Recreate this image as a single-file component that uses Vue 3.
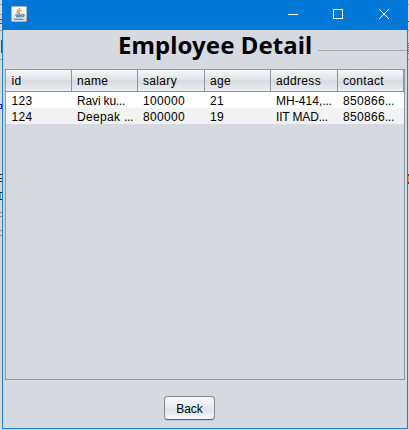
<script setup>
const columns = ['id', 'name', 'salary', 'age', 'address', 'contact']
const rows = [
  [
    { text: '123' },
    { text: 'Ravi ku', cut: true, fit: 'tight' },
    { text: '100000' },
    { text: '21' },
    { text: 'MH-414,', cut: true, fit: 'snug' },
    { text: '850866', cut: true },
  ],
  [
    { text: '124' },
    { text: 'Deepak ', cut: true },
    { text: '800000' },
    { text: '19' },
    { text: 'IIT MAD', cut: true, fit: 'tight' },
    { text: '850866', cut: true },
  ],
]
</script>

<template>
  <div class="desktop">
    <svg class="behind" width="409" height="430" viewBox="0 0 409 430" shape-rendering="crispEdges">
      <path d="M0 4.500h2M0 14.500h2M0 30.500h2M0 59.500h2M408 4.500h1M408 30.500h1M408 59.500h1" stroke="#9da1a8" />
      <path d="M0 19.500h2M0 23.500h2M408 21.500h1" stroke="#4c4a35" />
      <path d="M0 21.500h2" stroke="#d3a52c" />
      <path d="M1.500 40v13" stroke="#31546f" />
      <path d="M408.500 43v11" stroke="#777" stroke-dasharray="1 1" />
      <path d="M0 104.500h2M0 108.500h2M1.500 104v5" stroke="#2020d0" />
      <path d="M0 174.500h2M0 178.500h2M0 181.500h2M0 192.500h2M0 199.500h2" stroke="#20252c" />
      <path d="M0.500 193v6" stroke="#4aa0e8" />
      <path d="M0 212.500h2M0 216.500h2M0 230.500h2M0 235.500h2" stroke="#8e9297" />
      <path d="M408.500 174v10" stroke="#673b4c" />
      <path d="M408.500 176v6" stroke="#dca72d" />
    </svg>
    <main class="window">
      <header class="titlebar">
        <svg class="java" width="16" height="16" viewBox="0 0 16 16">
          <defs>
            <linearGradient id="tile" x1="0" y1="0" x2="0" y2="1">
              <stop offset="0" stop-color="#fff" /><stop offset="1" stop-color="#d9dcde" />
            </linearGradient>
          </defs>
          <rect x=".5" y=".5" width="15" height="15" rx="1" fill="url(#tile)" stroke="#b0b2b3" />
          <path d="M8.800 2c.5 1.500-3 2.300-2.700 4 .1.800.9 1.300 1.200 2M10.200 4.300C8.600 4.900 7.600 5.700 8.200 6.600c.4.600.4 1-.1 1.500" fill="none" stroke="#e98234" stroke-width="1.150" />
          <path d="M4.300 9.100h7M5 10.800h5.800M3 13.200h9.500M11.300 8.700c2.700-.5 2.200 1.600.1 2.100" fill="none" stroke="#4c708b" stroke-width="1.100" />
        </svg>
        <svg class="controls" width="120" height="30" viewBox="0 0 120 30" fill="none" stroke="#fff">
          <path d="M0 14.500h10" />
          <rect x="45.500" y="9.500" width="9" height="9" />
          <path d="M91.200 9.200l9.600 9.600M100.800 9.200l-9.600 9.600" />
        </svg>
      </header>
      <div class="heading">
        <h1>Employee Detail</h1>
        <span class="rule"></span>
      </div>
      <section class="pane">
        <div class="row head">
          <div v-for="c in columns" :key="c" class="cell">{{ c }}</div>
        </div>
        <div v-for="r in rows" :key="r[0].text" class="row data">
          <div v-for="(v, i) in r" :key="i" class="cell" :class="v.fit">{{ v.text }}<span v-if="v.cut" class="dots">...</span></div>
        </div>
      </section>
      <footer><button type="button">Back</button></footer>
    </main>
  </div>
</template>

<style>
body { margin: 0; overflow: hidden; }
</style>

<style scoped>
* { box-sizing: border-box; }
.desktop {
  position: relative;
  width: 409px;
  height: 430px;
  padding: 0 1px 1px 2px;
  background: #d5d8dc;
  overflow: hidden;
  font: 12px/16px "Liberation Sans", Arial, sans-serif;
  color: #000;
}
.behind { position: absolute; left: 0; top: 0; }
.window {
  position: relative;
  width: 406px;
  height: 429px;
  border: 1px solid #1883d7;
  border-top: 0;
  background: #d6d9df;
  display: flex;
  flex-direction: column;
}
.titlebar {
  height: 30px;
  flex: none;
  margin: 0 -1px;
  padding-left: 9px;
  background: #0078d7;
  display: flex;
  align-items: flex-start;
  justify-content: space-between;
}
.java { margin-top: 6px; }
.heading {
  height: 39px;
  flex: none;
  padding-left: 115px;
  display: flex;
  align-items: flex-start;
}
h1 {
  width: 194px;
  margin: 0;
  font: bold 24px/30px "Noto Sans", "Open Sans", sans-serif;
  letter-spacing: .06px;
  white-space: nowrap;
}
.rule {
  flex: 1;
  height: 1px;
  margin: 20px 0 0 6px;
  background: #a3a8b2;
}
.pane {
  width: 400px;
  height: 311px;
  flex: none;
  margin-left: 2px;
  border: 1px solid #9297a1;
}
.row { display: grid; grid-template-columns: 66px 66px 67px 66px 67px 66px; }
.cell {
  padding-left: 5px;
  letter-spacing: .33px;
  white-space: pre;
  overflow: hidden;
}
.snug { letter-spacing: .05px; }
.tight { letter-spacing: -.15px; }
.dots { letter-spacing: -.33px; }
.head {
  height: 22px;
  border-bottom: 1px solid #8a9099;
  background: linear-gradient(#f5f6f8 0, #dfe2e6 48%, #d6d9df 52%, #eceef2 100%);
}
.head .cell { border-right: 1px solid #8f959e; line-height: 22px; }
.data { height: 16px; background: #fff; }
.data + .data { background: #f2f2f2; }
.data .cell { line-height: 18px; }
.row .cell:first-child { padding-left: 5.5px; }
footer { display: flex; padding: 16px 0 0 161px; }
button {
  width: 51px;
  height: 24px;
  padding: 1px 0 0;
  border: 1px solid #868a91;
  border-bottom-color: #5f636b;
  border-radius: 4px;
  background: linear-gradient(#fafafc 0, #e8eaee 45%, #e0e3e9 60%, #f5f7fc 100%);
  box-shadow: 0 1px 0 #bfc3ca;
  font: 12px/20px "Liberation Sans", Arial, sans-serif;
  color: #000;
}
</style>
